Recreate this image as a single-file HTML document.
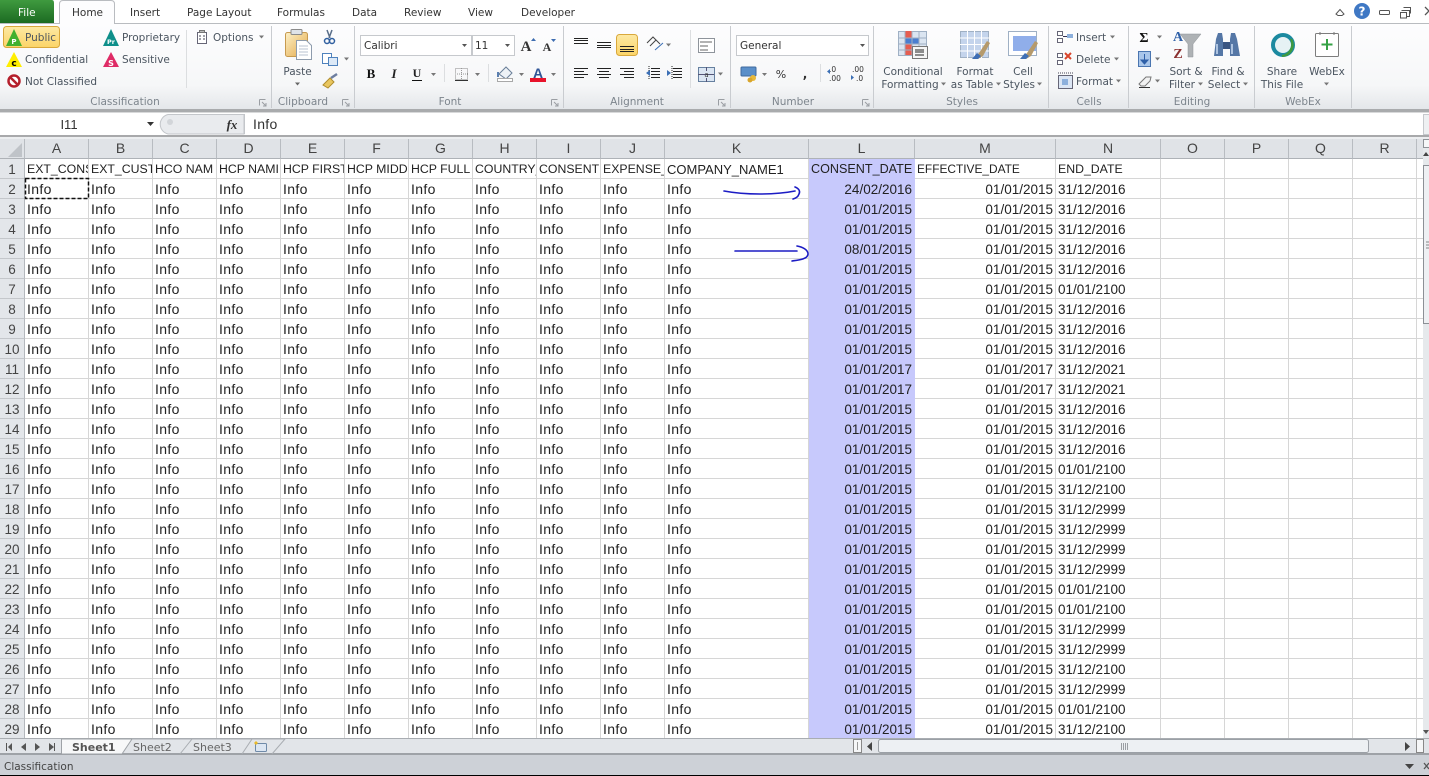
<!DOCTYPE html>
<html><head><meta charset="utf-8"><title>Excel</title>
<style>
html,body{margin:0;padding:0;width:1429px;height:776px;overflow:hidden;background:#fff}
body{position:relative;font-family:"Liberation Sans",sans-serif}
svg{position:absolute;left:0;top:0}
svg text{font-family:"DejaVu Sans",sans-serif;font-size:10.5px;fill:#4b5560}
svg text.g{fill:#7d858d}
svg text.c{text-anchor:middle}
svg text.k{fill:#333}
#grid{position:absolute;left:0;top:139px;height:600px;width:1429px;overflow:hidden}
table{border-collapse:separate;border-spacing:0;table-layout:fixed;width:1423px}
td,th{box-sizing:border-box;height:20px;padding:2px 2px 0;border:0;border-right:1px solid #d6d6d6;border-bottom:1px solid #d6d6d6;overflow:hidden;white-space:nowrap;font-weight:normal;font-size:14px;letter-spacing:.35px;color:#222;text-align:left;line-height:17px;vertical-align:top}
tr.h td{font-size:12.3px;letter-spacing:0}
th{background:#e3e6ea;color:#444;text-align:center;font-size:13.5px;letter-spacing:0;border-right:1px solid #b4b8bd;border-bottom:1px solid #c4c7cb;padding:2px 0 0}
thead th{background:#e0e3e7;border-right:1px solid #b8bcc1;border-bottom:1px solid #aeb2b7;color:#444;padding:1px 0 0;font-size:14px}
td.l{background:#c7c9fc;text-align:right;border-right:0;border-bottom:1px solid #c7c9fc;font-size:13.5px;letter-spacing:0;padding-right:3px}
td.r{text-align:right;font-size:13.5px;letter-spacing:0}
td.d{font-size:13.5px;letter-spacing:0}
</style></head><body>
<svg width="1429" height="139" viewBox="0 0 1429 139">
<defs>
<linearGradient id="rb" x1="0" y1="0" x2="0" y2="1"><stop offset="0" stop-color="#fdfdfe"/><stop offset=".72" stop-color="#f6f7f8"/><stop offset="1" stop-color="#e4e7ea"/></linearGradient>
<linearGradient id="gr" x1="0" y1="0" x2="0" y2="1"><stop offset="0" stop-color="#3f9a3f"/><stop offset="1" stop-color="#1c6b22"/></linearGradient>
<linearGradient id="ye" x1="0" y1="0" x2="0" y2="1"><stop offset="0" stop-color="#fde9a3"/><stop offset="1" stop-color="#fbd468"/></linearGradient>
<linearGradient id="cl" x1="0" y1="0" x2="1" y2="1"><stop offset="0" stop-color="#fdf1c8"/><stop offset="1" stop-color="#e3a94a"/></linearGradient>
</defs>
<rect width="1429" height="24" fill="#fff"/>
<rect y="24" width="1429" height="85" fill="url(#rb)"/>
<rect y="23" width="1429" height="1" fill="#b9bcc0"/>
<rect y="109" width="1429" height="3" fill="#a9abad"/>
<rect y="112" width="1429" height="1" fill="#d8d9da"/>
<rect y="135" width="1429" height="2" fill="#a8a9ab"/>
<rect y="137" width="1429" height="2" fill="#eceef0"/>
<!-- tabs -->
<path d="M0 0H52Q54 0 54 3V23H0Z" fill="url(#gr)"/>
<text x="18" y="16" style="fill:#fff;font-size:10.5px">File</text>
<path d="M59.5 24V4Q59.5 .5 63 .5H111Q114.5 .5 114.5 4V24" fill="#fdfdfe" stroke="#b9bcc0"/>
<text x="72" y="16" class="k">Home</text>
<text x="130" y="16" class="k">Insert</text>
<text x="187" y="16" class="k">Page Layout</text>
<text x="277" y="16" class="k">Formulas</text>
<text x="352" y="16" class="k">Data</text>
<text x="404" y="16" class="k">Review</text>
<text x="468" y="16" class="k">View</text>
<text x="521" y="16" class="k">Developer</text>
<!-- window controls -->
<path d="M1336 14L1340 9.500L1344 14L1342 15.500H1338Z" fill="none" stroke="#555"/>
<circle cx="1362" cy="11" r="8" fill="#3f78c4"/><text x="1362" y="15.500" class="c" style="fill:#fff;font-size:12px;font-weight:bold">?</text>
<rect x="1379.500" y="10.500" width="10" height="4" rx="1" fill="#fff" stroke="#555"/>
<path d="M1401.500 10.500h8v6h-3M1400.500 12.500h6v5.500h-6z" fill="#fff" stroke="#555"/><path d="M1403.500 7.500h7v6" fill="none" stroke="#555"/>
<path d="M1425 7l4 4-4 4" fill="none" stroke="#555" stroke-width="1.300"/>
<!-- separators -->
<g stroke="#c9ccd0"><path d="M271.500 26V108M354.500 26V108M563.500 26V108M730.500 26V108M873.500 26V108M1048.500 26V108M1128.500 26V108M1254.500 26V108M1351.500 26V108"/><path d="M186.500 30V88M444.500 64V82M488.500 64V82M690.500 30V88M820.500 64V82" stroke="#dcdee0"/></g>
<!-- group labels -->
<text x="125" y="105" class="g c">Classification</text>
<text x="303" y="105" class="g c">Clipboard</text>
<text x="450" y="105" class="g c">Font</text>
<text x="637" y="105" class="g c">Alignment</text>
<text x="793" y="105" class="g c">Number</text>
<text x="962" y="105" class="g c">Styles</text>
<text x="1089" y="105" class="g c">Cells</text>
<text x="1192" y="105" class="g c">Editing</text>
<text x="1303" y="105" class="g c">WebEx</text>
<g fill="none" stroke="#9a9ea3"><path d="M259.500 99.500h6M259.500 99.500v6M262 102l4 4M266 103v3h-3"/><path d="M342.500 99.500h6M342.500 99.500v6M345 102l4 4M349 103v3h-3"/><path d="M551.500 99.500h6M551.500 99.500v6M554 102l4 4M558 103v3h-3"/><path d="M718.500 99.500h6M718.500 99.500v6M721 102l4 4M725 103v3h-3"/><path d="M862.500 99.500h6M862.500 99.500v6M865 102l4 4M869 103v3h-3"/></g>
<!-- classification -->
<rect x="3.500" y="26.500" width="56" height="21" rx="3" fill="url(#ye)" stroke="#d9a83c"/>
<path d="M14 29L22 46H6Z" fill="#42b02e"/><text x="14" y="44" class="c" style="fill:#fff;font-size:7px;font-weight:bold">P</text>
<text x="25" y="41">Public</text>
<path d="M14 52L22 67H6Z" fill="#ffee00"/><text x="14" y="66" class="c" style="fill:#000;font-size:9px;font-weight:bold">c</text>
<text x="25" y="63">Confidential</text>
<circle cx="14" cy="81" r="5.500" fill="#fff" stroke="#b5202c" stroke-width="2.500"/><path d="M10 77L18 85" stroke="#b5202c" stroke-width="2.500"/>
<text x="25" y="85">Not Classified</text>
<path d="M111 29L119 46H103Z" fill="#0e8f8a"/><text x="111" y="44" class="c" style="fill:#fff;font-size:6.500px;font-weight:bold">Pr</text>
<text x="122" y="41">Proprietary</text>
<path d="M111 52L119 67H103Z" fill="#df2b66"/><text x="111" y="66" class="c" style="fill:#fff;font-size:8px;font-weight:bold">S</text>
<text x="122" y="63">Sensitive</text>
<rect x="197.500" y="32.500" width="9" height="11" fill="#fff" stroke="#667"/><path d="M199 36h2M203 36h2M199 39h2M203 39h2" stroke="#445"/><rect x="199.500" y="30.500" width="5" height="2" fill="#bbb" stroke="#777"/>
<text x="213" y="41">Options</text>
<path d="M259 35.500h5l-2.500 3z" fill="#777"/>
<!-- clipboard -->
<rect x="285.500" y="32.500" width="22" height="24" rx="2" fill="url(#cl)" stroke="#c79a4f"/>
<rect x="291" y="29.500" width="11" height="5" rx="1" fill="#dfe3e8" stroke="#8b8b8b"/>
<path d="M296.500 40.500h10l5 5v14h-15z" fill="#fff" stroke="#8e9cad"/><path d="M299 46h9M299 49h9M299 52h9M299 55h9" stroke="#b8c3d1"/>
<text x="297.500" y="75" class="c">Paste</text><path d="M295 82.500h5l-2.500 3z" fill="#666"/>
<path d="M327 30l3 8M332 30l-3 8" stroke="#5a6f8a" stroke-width="1.500"/><circle cx="327" cy="41" r="2.500" fill="none" stroke="#2f5f9f" stroke-width="1.500"/><circle cx="332" cy="41" r="2.500" fill="none" stroke="#2f5f9f" stroke-width="1.500"/>
<rect x="322.500" y="53.500" width="9" height="10" fill="#fff" stroke="#4f82bd"/><rect x="328.500" y="57.500" width="9" height="8" fill="#dce9f7" stroke="#4f82bd"/><path d="M344 57.500h5l-2.500 3z" fill="#777"/>
<path d="M323 85l7-7 4 4-6 6z" fill="#e9c65f" stroke="#b08d2d"/><path d="M331 78l6-4" stroke="#6d7ea0" stroke-width="2.500"/>
<!-- font -->
<rect x="360.500" y="35.500" width="111" height="20" fill="#fff" stroke="#c6c9cd"/><text x="364" y="49" class="k">Calibri</text><path d="M462 44h5l-2.500 3z" fill="#555"/>
<rect x="472.500" y="35.500" width="42" height="20" fill="#fff" stroke="#c6c9cd"/><text x="475" y="49" class="k">11</text><path d="M505 44h5l-2.500 3z" fill="#555"/>
<text x="526" y="51" class="c" style="font-family:'Liberation Serif';font-size:15px;font-weight:bold;fill:#333">A</text><path d="M531 41h5l-2.500-3z" fill="#3d6cb0"/>
<text x="547" y="51" class="c" style="font-family:'Liberation Serif';font-size:12px;font-weight:bold;fill:#333">A</text><path d="M551 39h5l-2.500 3z" fill="#3d6cb0"/>
<text x="371" y="78" class="c" style="font-family:'Liberation Serif';font-size:13px;font-weight:bold;fill:#111">B</text>
<text x="394" y="78" class="c" style="font-family:'Liberation Serif';font-size:13px;font-style:italic;font-weight:bold;fill:#222">I</text>
<text x="417" y="77" class="c" style="font-family:'Liberation Serif';font-size:12px;font-weight:bold;fill:#222">U</text><path d="M412 80.500h10" stroke="#111"/><path d="M431 73h5l-2.500 3z" fill="#777"/>
<rect x="455.500" y="68.500" width="12" height="11" fill="none" stroke="#888" stroke-dasharray="1 1"/><path d="M461.500 68v12M455 74h13" stroke="#999" stroke-dasharray="1 1"/><path d="M455 80.500h13" stroke="#333"/><path d="M475 73h5l-2.500 3z" fill="#777"/>
<path d="M499 74l7-7 6 6-6 6z" fill="#eef2f6" stroke="#6a7f99"/><path d="M498 72v5" stroke="#5b7fb0" stroke-width="2"/><rect x="497.500" y="78.500" width="15" height="3" fill="#fff" stroke="#a8a8a8"/><path d="M519 73h5l-2.500 3z" fill="#777"/>
<text x="538" y="78" class="c" style="font-family:'Liberation Sans';font-size:14px;font-weight:bold;fill:#2f5597">A</text><rect x="530" y="78" width="16" height="4" fill="#e8132b"/><path d="M551 73h5l-2.500 3z" fill="#777"/>
<!-- alignment -->
<rect x="616.500" y="34.500" width="21" height="21" rx="3" fill="url(#ye)" stroke="#d9a83c"/>
<g stroke="#222" fill="none"><path d="M574 38.500h14M574 40.500h14M574 43.500h14"/><path d="M597 42.500h14M597 45.500h14M597 47.500h14"/><path d="M620 46.500h14M620 49.500h14M620 51.500h14"/>
<path d="M574 68.500h14M574 71.500h10M574 74.500h14M574 77.500h10"/><path d="M597 68.500h14M599 71.500h10M597 74.500h14M599 77.500h10"/><path d="M620 68.500h14M624 71.500h10M620 74.500h14M624 77.500h10"/>
<path d="M651 68.500h9M651 71.500h9M651 74.500h9M651 77.500h9"/><path d="M673 68.500h9M673 71.500h9M673 74.500h9M673 77.500h9"/><path d="M649 66v14M672 66v14" stroke-dasharray="1 1"/></g>
<path d="M646 73l4-3v6zM667 70l4 3-4 3z" fill="#3b6fb5"/>
<path d="M647 43l6-6 4 4M650 46l6-6 4 4" stroke="#444" fill="none"/><path d="M655 50l8-7" stroke="#3b6fb5"/><path d="M666 43.500h5l-2.500 3z" fill="#777"/>
<rect x="698.500" y="38.500" width="16" height="14" fill="#fff" stroke="#8e949b"/><path d="M700 42h12M700 46h8M700 50h8" stroke="#666"/>
<rect x="698.500" y="67.500" width="16" height="14" fill="#dbe6f3" stroke="#66809f"/><path d="M698 74.500h16M706.500 67v4M706.500 78v4" stroke="#557"/><text x="706.500" y="77" class="c" style="font-size:7px;fill:#333">a</text><path d="M718 72.500h5l-2.500 3z" fill="#777"/>
<!-- number -->
<rect x="736.500" y="35.500" width="132" height="20" fill="#fff" stroke="#c6c9cd"/><text x="740" y="49" class="k">General</text><path d="M860 44h5l-2.500 3z" fill="#555"/>
<rect x="741" y="67" width="15" height="9" rx="1" fill="#5a8fc9" stroke="#3f6a9e"/><circle cx="753" cy="78" r="3" fill="#e8b93a"/><circle cx="750" cy="80" r="2.500" fill="#d8a52c"/><path d="M762 73h5l-2.500 3z" fill="#777"/>
<text x="781" y="78" class="c" style="font-size:11px;fill:#333">%</text><text x="805" y="78" class="c" style="font-size:12px;font-weight:bold;fill:#333">,</text>
<text x="829" y="72" style="font-size:7.500px;fill:#333">.0</text><text x="829" y="81" style="font-size:7.500px;fill:#333">.00</text><path d="M830 69l-3 2.500 3 2.500" fill="#3b6fb5"/>
<text x="852" y="72" style="font-size:7.500px;fill:#333">.00</text><text x="856" y="81" style="font-size:7.500px;fill:#333">.0</text><path d="M851 75l3 2.500-3 2.500" fill="#3b6fb5"/>
<!-- conditional -->
<g fill="#dbe5f1" stroke="#9fb0c4"><rect x="898.500" y="31.500" width="28" height="24"/></g>
<rect x="905" y="31" width="7" height="24" fill="#e65d50"/><rect x="905" y="38" width="14" height="6" fill="#4a7ed0"/><rect x="905" y="44" width="7" height="6" fill="#e65d50"/>
<path d="M898 38h29M898 44h29M898 50h29M905 31v25M912 31v25M919 31v25" stroke="#9fb0c4" fill="none"/>
<rect x="912.500" y="46.500" width="15" height="12" fill="#f6f6f6" stroke="#777"/><path d="M915 50h9M915 52h9M915 55h9" stroke="#222"/>
<text x="913" y="75" class="c">Conditional</text><text x="910" y="88" class="c">Formatting</text><path d="M941 82.500h5l-2.500 3z" fill="#777"/>
<!-- format table -->
<rect x="960.500" y="31.500" width="28" height="26" fill="#c4d4ec" stroke="#9fb0c4"/><path d="M960 38h29M960 44.500h29M960 51h29M967.500 31v27M974.500 31v27M981.500 31v27" stroke="#fff"/>
<path d="M974 58l5-5 8-12 3 2-7 13-5 3z" fill="#b59a6c"/><path d="M972 59l5-6 4 3-3 3z" fill="#3f6fb5"/>
<text x="975" y="75" class="c">Format</text><text x="972" y="88" class="c">as Table</text><path d="M996 82.500h5l-2.500 3z" fill="#777"/>
<!-- cell styles -->
<rect x="1008.500" y="31.500" width="28" height="24" fill="#fff" stroke="#9fb0c4"/><rect x="1013" y="36" width="23" height="15" fill="#90aeea"/>
<path d="M1022 58l5-5 8-12 3 2-7 13-5 3z" fill="#b59a6c"/><path d="M1020 59l5-6 4 3-3 3z" fill="#3f6fb5"/>
<text x="1023" y="75" class="c">Cell</text><text x="1019" y="88" class="c">Styles</text><path d="M1037 82.500h5l-2.500 3z" fill="#777"/>
<!-- cells -->
<g fill="#fff" stroke="#667"><rect x="1057.500" y="31.500" width="5" height="4"/><rect x="1057.500" y="38.500" width="5" height="4"/><rect x="1057.500" y="53.500" width="5" height="4"/><rect x="1057.500" y="60.500" width="5" height="4"/><rect x="1058.500" y="75.500" width="14" height="13" fill="#dce6f4"/></g>
<path d="M1063 36.500h8" stroke="#335"/><rect x="1067" y="34" width="6" height="4" fill="#8db0dc"/><path d="M1065 53l6 6M1071 53l-6 6" stroke="#d9442b" stroke-width="2"/><path d="M1058 73h15" stroke="#445" stroke-dasharray="1 1"/><rect x="1062" y="79" width="6" height="6" fill="#8db0dc"/>
<text x="1076" y="41">Insert</text><text x="1076" y="63">Delete</text><text x="1076" y="85">Format</text>
<path d="M1110 35.500h5l-2.500 3zM1114 57.500h5l-2.500 3zM1116 79.500h5l-2.500 3z" fill="#777"/>
<!-- editing -->
<text x="1144" y="42" class="c" style="font-family:'Liberation Serif';font-size:14px;font-weight:bold;fill:#111">Σ</text><path d="M1157 35.500h5l-2.500 3zM1155 57.500h5l-2.500 3zM1155 79.500h5l-2.500 3z" fill="#777"/>
<rect x="1138.500" y="51.500" width="12" height="15" fill="#a9c6ea" stroke="#4a75b0"/><path d="M1144.500 54v8M1141 60l3.500 4 3.500-4z" stroke="#2e5fa8" fill="#2e5fa8"/>
<path d="M1139 84l7-7h5l-1 4-5 5h-4z" fill="#f2f2f2" stroke="#777"/><path d="M1139 87.500h11" stroke="#333"/>
<path d="M1180 34h21l-8 10v13h-5V44z" fill="#aeb2b5" stroke="#8f9497" stroke-width=".5"/>
<text x="1178" y="41" class="c" style="font-family:'Liberation Serif';font-size:14px;font-weight:bold;fill:#3061a8">A</text><text x="1178" y="58" class="c" style="font-family:'Liberation Serif';font-size:14px;font-weight:bold;fill:#8a2f2f">Z</text>
<text x="1186" y="75" class="c">Sort &amp;</text><text x="1182" y="88" class="c">Filter</text><path d="M1198 82.500h5l-2.500 3z" fill="#777"/>
<path d="M1216 39l2-6h4l1 6v17h-9zM1230 39l1-6h4l2 6 3 17h-10z" fill="#5577a6"/><rect x="1223" y="42" width="7" height="7" fill="#3b5682"/><path d="M1217 44v10M1232 44v10" stroke="#adc3e0" stroke-width="2"/>
<text x="1228" y="75" class="c">Find &amp;</text><text x="1224" y="88" class="c">Select</text><path d="M1243 82.500h5l-2.500 3z" fill="#777"/>
<!-- webex -->
<circle cx="1283" cy="45" r="10" fill="#e6f2f4" stroke="#1c8aa0" stroke-width="4"/><path d="M1291 39a11 11 0 0 1-9 17 12 12 0 0 0 9-17z" fill="#3f9a3f" stroke="#3f9a3f" stroke-width="2"/>
<text x="1282" y="75" class="c">Share</text><text x="1282" y="88" class="c">This File</text>
<rect x="1315.500" y="33.500" width="23" height="23" rx="1" fill="#fff" stroke="#7d7d7d"/><path d="M1327 39v11M1321.500 44.500h11" stroke="#35a245" stroke-width="2"/><path d="M1320 32v3M1334 32v3" stroke="#777"/>
<text x="1327" y="75" class="c">WebEx</text><path d="M1324 82.500h5l-2.500 3z" fill="#777"/>
<!-- formula bar -->
<rect y="113" width="1429" height="22" fill="#fff"/>
<text x="69" y="129" class="c" style="font-family:'Liberation Sans';font-size:13px;fill:#333">I11</text>
<path d="M147 122h7l-3.500 4z" fill="#333"/>
<path d="M168 114.500H244V134H168A10 10 0 0 1 168 114.500Z" fill="#e9ebee" stroke="#c3c6ca"/>
<circle cx="170" cy="122" r="3" fill="#d2d5d9"/>
<text x="232" y="129" class="c" style="font-family:'Liberation Serif';font-style:italic;font-weight:bold;font-size:13px;fill:#333">fx</text>
<path d="M244.500 114V134" stroke="#c3c6ca"/>
<text x="253" y="129" style="font-family:'Liberation Sans';font-size:14px;letter-spacing:.3px;fill:#333">Info</text>
<rect x="1423.500" y="114.500" width="6" height="20" fill="#eef0f2" stroke="#c6c9cd"/>
</svg>
<div id="grid"><table><colgroup><col style="width:25px"><col style="width:64px"><col style="width:64px"><col style="width:64px"><col style="width:64px"><col style="width:64px"><col style="width:64px"><col style="width:64px"><col style="width:64px"><col style="width:64px"><col style="width:64px"><col style="width:144px"><col style="width:106px"><col style="width:141px"><col style="width:105px"><col style="width:64px"><col style="width:64px"><col style="width:64px"><col style="width:64px"><col style="width:7px"></colgroup>
<thead><tr><th><th>A<th>B<th>C<th>D<th>E<th>F<th>G<th>H<th>I<th>J<th>K<th>L<th>M<th>N<th>O<th>P<th>Q<th>R<th style="border-right:0"></tr></thead>
<tbody>
<tr class="h"><th>1<td>EXT_CONS<td>EXT_CUST<td>HCO NAM<td>HCP NAMI<td>HCP FIRST<td>HCP MIDD<td>HCP FULL I<td>COUNTRY_<td>CONSENT<td>EXPENSE_<td style="font-size:13px">COMPANY_NAME1<td class="l" style="text-align:left;font-size:12.6px">CONSENT_DATE<td style="font-size:11.9px">EFFECTIVE_DATE<td>END_DATE<td><td><td><td><td></tr>
<tr><th>2<td>Info<td>Info<td>Info<td>Info<td>Info<td>Info<td>Info<td>Info<td>Info<td>Info<td>Info<td class="l">24/02/2016<td class="r">01/01/2015<td class="d">31/12/2016<td><td><td><td><td></tr>
<tr><th>3<td>Info<td>Info<td>Info<td>Info<td>Info<td>Info<td>Info<td>Info<td>Info<td>Info<td>Info<td class="l">01/01/2015<td class="r">01/01/2015<td class="d">31/12/2016<td><td><td><td><td></tr>
<tr><th>4<td>Info<td>Info<td>Info<td>Info<td>Info<td>Info<td>Info<td>Info<td>Info<td>Info<td>Info<td class="l">01/01/2015<td class="r">01/01/2015<td class="d">31/12/2016<td><td><td><td><td></tr>
<tr><th>5<td>Info<td>Info<td>Info<td>Info<td>Info<td>Info<td>Info<td>Info<td>Info<td>Info<td>Info<td class="l">08/01/2015<td class="r">01/01/2015<td class="d">31/12/2016<td><td><td><td><td></tr>
<tr><th>6<td>Info<td>Info<td>Info<td>Info<td>Info<td>Info<td>Info<td>Info<td>Info<td>Info<td>Info<td class="l">01/01/2015<td class="r">01/01/2015<td class="d">31/12/2016<td><td><td><td><td></tr>
<tr><th>7<td>Info<td>Info<td>Info<td>Info<td>Info<td>Info<td>Info<td>Info<td>Info<td>Info<td>Info<td class="l">01/01/2015<td class="r">01/01/2015<td class="d">01/01/2100<td><td><td><td><td></tr>
<tr><th>8<td>Info<td>Info<td>Info<td>Info<td>Info<td>Info<td>Info<td>Info<td>Info<td>Info<td>Info<td class="l">01/01/2015<td class="r">01/01/2015<td class="d">31/12/2016<td><td><td><td><td></tr>
<tr><th>9<td>Info<td>Info<td>Info<td>Info<td>Info<td>Info<td>Info<td>Info<td>Info<td>Info<td>Info<td class="l">01/01/2015<td class="r">01/01/2015<td class="d">31/12/2016<td><td><td><td><td></tr>
<tr><th>10<td>Info<td>Info<td>Info<td>Info<td>Info<td>Info<td>Info<td>Info<td>Info<td>Info<td>Info<td class="l">01/01/2015<td class="r">01/01/2015<td class="d">31/12/2016<td><td><td><td><td></tr>
<tr><th>11<td>Info<td>Info<td>Info<td>Info<td>Info<td>Info<td>Info<td>Info<td>Info<td>Info<td>Info<td class="l">01/01/2017<td class="r">01/01/2017<td class="d">31/12/2021<td><td><td><td><td></tr>
<tr><th>12<td>Info<td>Info<td>Info<td>Info<td>Info<td>Info<td>Info<td>Info<td>Info<td>Info<td>Info<td class="l">01/01/2017<td class="r">01/01/2017<td class="d">31/12/2021<td><td><td><td><td></tr>
<tr><th>13<td>Info<td>Info<td>Info<td>Info<td>Info<td>Info<td>Info<td>Info<td>Info<td>Info<td>Info<td class="l">01/01/2015<td class="r">01/01/2015<td class="d">31/12/2016<td><td><td><td><td></tr>
<tr><th>14<td>Info<td>Info<td>Info<td>Info<td>Info<td>Info<td>Info<td>Info<td>Info<td>Info<td>Info<td class="l">01/01/2015<td class="r">01/01/2015<td class="d">31/12/2016<td><td><td><td><td></tr>
<tr><th>15<td>Info<td>Info<td>Info<td>Info<td>Info<td>Info<td>Info<td>Info<td>Info<td>Info<td>Info<td class="l">01/01/2015<td class="r">01/01/2015<td class="d">31/12/2016<td><td><td><td><td></tr>
<tr><th>16<td>Info<td>Info<td>Info<td>Info<td>Info<td>Info<td>Info<td>Info<td>Info<td>Info<td>Info<td class="l">01/01/2015<td class="r">01/01/2015<td class="d">01/01/2100<td><td><td><td><td></tr>
<tr><th>17<td>Info<td>Info<td>Info<td>Info<td>Info<td>Info<td>Info<td>Info<td>Info<td>Info<td>Info<td class="l">01/01/2015<td class="r">01/01/2015<td class="d">31/12/2100<td><td><td><td><td></tr>
<tr><th>18<td>Info<td>Info<td>Info<td>Info<td>Info<td>Info<td>Info<td>Info<td>Info<td>Info<td>Info<td class="l">01/01/2015<td class="r">01/01/2015<td class="d">31/12/2999<td><td><td><td><td></tr>
<tr><th>19<td>Info<td>Info<td>Info<td>Info<td>Info<td>Info<td>Info<td>Info<td>Info<td>Info<td>Info<td class="l">01/01/2015<td class="r">01/01/2015<td class="d">31/12/2999<td><td><td><td><td></tr>
<tr><th>20<td>Info<td>Info<td>Info<td>Info<td>Info<td>Info<td>Info<td>Info<td>Info<td>Info<td>Info<td class="l">01/01/2015<td class="r">01/01/2015<td class="d">31/12/2999<td><td><td><td><td></tr>
<tr><th>21<td>Info<td>Info<td>Info<td>Info<td>Info<td>Info<td>Info<td>Info<td>Info<td>Info<td>Info<td class="l">01/01/2015<td class="r">01/01/2015<td class="d">31/12/2999<td><td><td><td><td></tr>
<tr><th>22<td>Info<td>Info<td>Info<td>Info<td>Info<td>Info<td>Info<td>Info<td>Info<td>Info<td>Info<td class="l">01/01/2015<td class="r">01/01/2015<td class="d">01/01/2100<td><td><td><td><td></tr>
<tr><th>23<td>Info<td>Info<td>Info<td>Info<td>Info<td>Info<td>Info<td>Info<td>Info<td>Info<td>Info<td class="l">01/01/2015<td class="r">01/01/2015<td class="d">01/01/2100<td><td><td><td><td></tr>
<tr><th>24<td>Info<td>Info<td>Info<td>Info<td>Info<td>Info<td>Info<td>Info<td>Info<td>Info<td>Info<td class="l">01/01/2015<td class="r">01/01/2015<td class="d">31/12/2999<td><td><td><td><td></tr>
<tr><th>25<td>Info<td>Info<td>Info<td>Info<td>Info<td>Info<td>Info<td>Info<td>Info<td>Info<td>Info<td class="l">01/01/2015<td class="r">01/01/2015<td class="d">31/12/2999<td><td><td><td><td></tr>
<tr><th>26<td>Info<td>Info<td>Info<td>Info<td>Info<td>Info<td>Info<td>Info<td>Info<td>Info<td>Info<td class="l">01/01/2015<td class="r">01/01/2015<td class="d">31/12/2100<td><td><td><td><td></tr>
<tr><th>27<td>Info<td>Info<td>Info<td>Info<td>Info<td>Info<td>Info<td>Info<td>Info<td>Info<td>Info<td class="l">01/01/2015<td class="r">01/01/2015<td class="d">31/12/2999<td><td><td><td><td></tr>
<tr><th>28<td>Info<td>Info<td>Info<td>Info<td>Info<td>Info<td>Info<td>Info<td>Info<td>Info<td>Info<td class="l">01/01/2015<td class="r">01/01/2015<td class="d">01/01/2100<td><td><td><td><td></tr>
<tr><th>29<td>Info<td>Info<td>Info<td>Info<td>Info<td>Info<td>Info<td>Info<td>Info<td>Info<td>Info<td class="l">01/01/2015<td class="r">01/01/2015<td class="d">31/12/2100<td><td><td><td><td></tr>
</tbody></table></div>
<svg width="1429" height="776" viewBox="0 0 1429 776" style="pointer-events:none">
<defs><linearGradient id="th" x1="0" y1="0" x2="0" y2="1"><stop offset="0" stop-color="#f3f5f7"/><stop offset="1" stop-color="#d5d9df"/></linearGradient></defs>
<path d="M22 143V157H8Z" fill="#bfc3c8"/>
<rect x="25.500" y="178.500" width="63" height="20" fill="none" stroke="#111" stroke-width="1.500" stroke-dasharray="4 2"/>
<g fill="none" stroke="#1c1cc4" stroke-width="1.600" stroke-linecap="round">
<path d="M724 191C745 195 775 195 795 191"/><path d="M795 187C800 189 800 192 799 194C798 197 796 198 793 199"/>
<path d="M735 251L797 251"/><path d="M797 246C803 247 808 250 808 254C808 259 799 260 792 261"/>
</g>
<!-- vertical scrollbar -->
<rect x="1423" y="139" width="6" height="600" fill="#e6e9ec"/>
<rect x="1423.500" y="139.500" width="6" height="8" fill="#f6f7f8" stroke="#8f9398"/>
<path d="M1426 152l3 4h-6z" fill="#444"/>
<rect x="1423.500" y="165.500" width="7" height="158" fill="#eef0f3" stroke="#8c9096"/>
<path d="M1426 242h3M1426 245h3M1426 248h3" stroke="#888"/>
<path d="M1426 734l3-4h-6z" fill="#555"/>
<!-- sheet tab bar -->
<rect y="738" width="1429" height="17" fill="#e2e5e9"/>
<rect y="738" width="1429" height="1" fill="#a9adb2"/>
<rect y="753" width="1429" height="2" fill="#9ea2a7"/>
<g fill="#555"><path d="M6 743v8h1v-8zM12 743v8l-4-4z"/><path d="M26 743v8l-5-4z"/><path d="M35 743v8l5-4z"/><path d="M49 743v8l5-4zM55 743v8h-1v-8z"/></g>
<path d="M61.500 754V739H132L122 754Z" fill="#f7f8f9" stroke="#9ea2a7"/>
<path d="M132 739H192L180 754M192 739H252L242 754M252 739H285L272 754" fill="none" stroke="#a9adb2"/>
<text x="72" y="751" style="font-size:11px;font-weight:bold;fill:#555">Sheet1</text>
<text x="133" y="751" style="font-size:11px;fill:#666">Sheet2</text>
<text x="193" y="751" style="font-size:11px;fill:#666">Sheet3</text>
<rect x="255.500" y="743.500" width="11" height="8" rx="1" fill="#dce6f2" stroke="#6f8aa8"/><path d="M256 741l2 2-2 2-2-2z" fill="#e9b928"/>
<!-- horizontal scrollbar -->
<rect x="853.500" y="739.500" width="8" height="13" fill="#f5f6f7" stroke="#888"/><path d="M857.500 742v8" stroke="#999"/>
<path d="M872 742v9l-5-4.500z" fill="#444"/>
<rect x="878.500" y="739.500" width="490" height="13" rx="2" fill="#edf0f3" stroke="#9ba0a6"/>
<path d="M1121.500 743v7M1123.500 743v7M1125.500 743v7M1127.500 743v7" stroke="#9a9ea3"/>
<path d="M1405 742v9l5-4.500z" fill="#444"/>
<rect x="1416.500" y="739.500" width="7" height="13" fill="#f5f6f7" stroke="#888"/>
<!-- status bar -->
<rect y="755" width="1429" height="20" fill="#cdd1d7"/>
<rect y="775" width="1429" height="1" fill="#000"/>
<text x="4" y="770" style="font-size:10.500px;fill:#444">Classification</text>
<path d="M1405 764h9l-4.500 5z" fill="#444"/><path d="M1424 763l5 6M1429 763l-5 6" stroke="#555" stroke-width="1.300"/>
</svg>
</body></html>
